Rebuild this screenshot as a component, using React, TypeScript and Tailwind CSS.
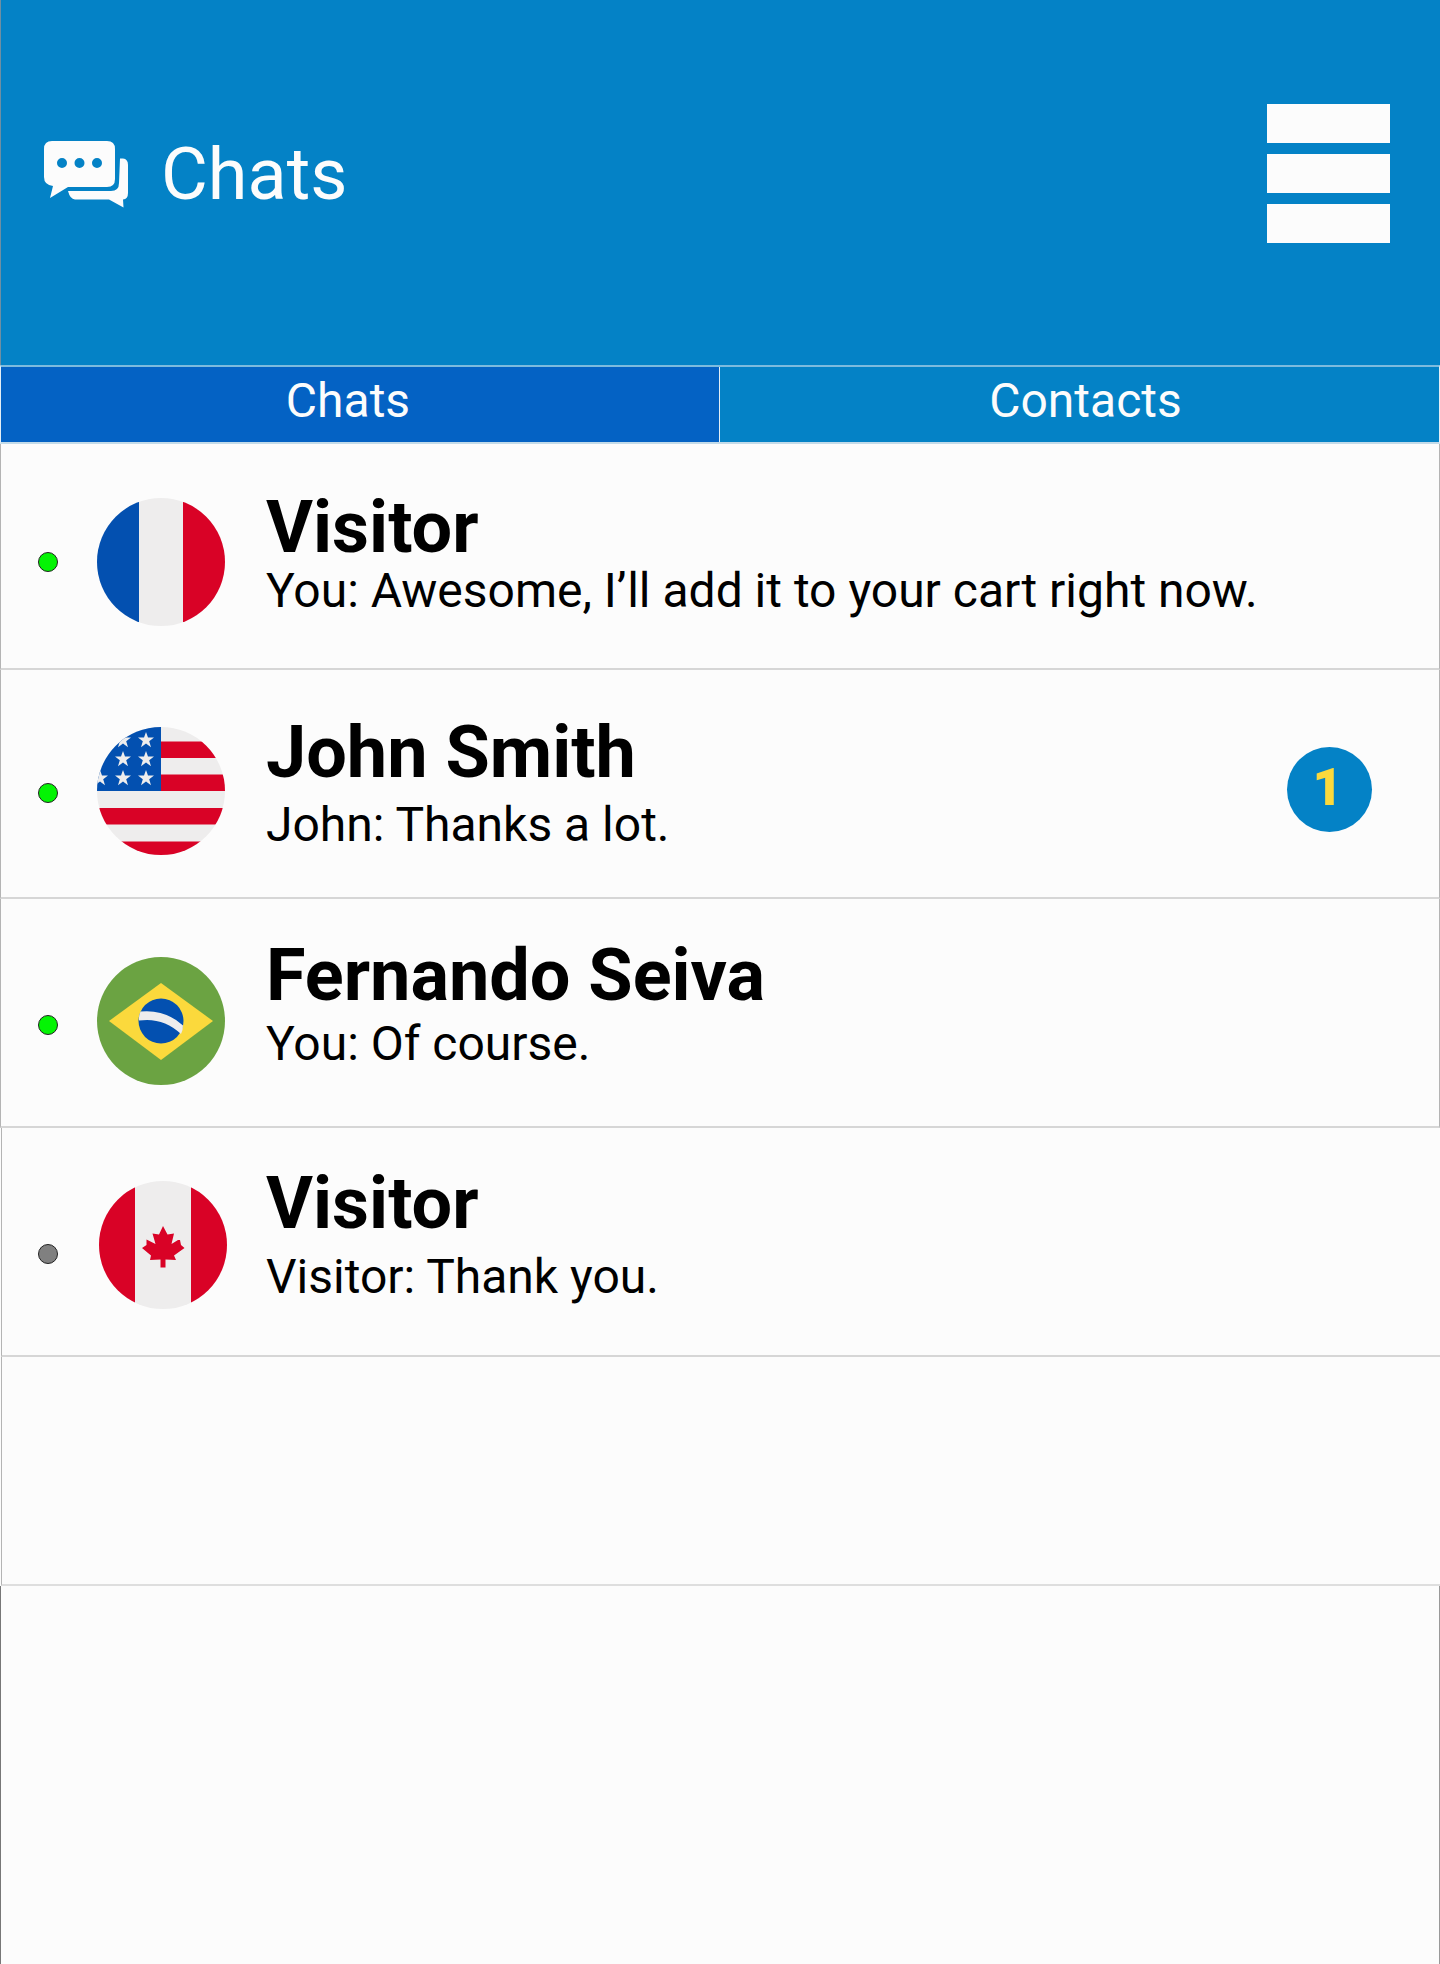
import type { ReactNode } from "react";

function ChatsIcon() {
  return (
    <svg viewBox="0 0 84 67" className="h-[67px] w-[84px] shrink-0" fill="#fcfcfc" aria-hidden="true">
      <path
        fillRule="evenodd"
        d="M8 0H63Q71 0 71 8V38Q71 46 63 46H24L6 57L9 45Q0 44 0 36V8Q0 0 8 0ZM18 17a5 5 0 1 0 0 10a5 5 0 1 0 0-10ZM35.500 17a5 5 0 1 0 0 10a5 5 0 1 0 0-10ZM53 17a5 5 0 1 0 0 10a5 5 0 1 0 0-10Z"
      />
      <path d="M76 17.500H79Q84 18 84 24V52Q84 58 79 58.500L79.500 66.500L65 58.500H31Q26 58 24 50H67Q75 50 75 42Z" />
    </svg>
  );
}

function Flag({ id, children }: { id: string; children: ReactNode }) {
  return (
    <svg viewBox="0 0 128 128" className="size-32 shrink-0" aria-hidden="true">
      <clipPath id={id}>
        <circle cx="64" cy="64" r="64" />
      </clipPath>
      <g clipPath={`url(#${id})`}>{children}</g>
    </svg>
  );
}

const france = (
  <Flag id="fr">
    <rect width="128" height="128" fill="#eeeded" />
    <rect width="42" height="128" fill="#0350b0" />
    <rect x="86" width="42" height="128" fill="#d90226" />
  </Flag>
);

const starCenters = [
  [26, 13], [49, 13],
  [26, 32], [49, 32],
  [3, 51], [26, 51], [49, 51],
];

const usa = (
  <Flag id="us">
    <rect width="128" height="128" fill="#eeeded" />
    <path fill="#d90226" d="M64 14.500h64v16.500H64zM64 47.500h64V64H64zM0 81h128v16.500H0zM0 114.500h128V128H0z" />
    <rect width="64" height="64" fill="#0350b0" />
    {starCenters.map(([x, y]) => (
      <path
        key={`${x}-${y}`}
        transform={`translate(${x} ${y})`}
        fill="#eeeded"
        d="M0-8L2-2.500H8L3.200 1.200L5 7.200L0 3.500L-5 7.200L-3.200 1.200L-8-2.500H-2Z"
      />
    ))}
  </Flag>
);

const brazil = (
  <Flag id="br">
    <rect width="128" height="128" fill="#6ba342" />
    <path fill="#fbd93c" d="M64 26L116 64L64 103L12 64Z" />
    <circle cx="64" cy="64" r="22.500" fill="#0350b0" />
    <path fill="#eeeded" d="M43.500 54.500Q68 52 86 68.500Q86 73 84 77Q66 60 42 63.500Q41.500 59 43.500 54.500Z" />
  </Flag>
);

const canada = (
  <Flag id="ca">
    <rect width="128" height="128" fill="#eeeded" />
    <rect width="36" height="128" fill="#d90226" />
    <rect x="92" width="36" height="128" fill="#d90226" />
    <path
      fill="#d90226"
      d="M64 45L68.500 53.500L75 52.500L72.500 63L79 59L81 59L82 64L85.500 67L75 74.500L77 79L66.500 78.500V86.500H61.500V78.500L51 79L52 74.500L43 67L47.500 64L47.500 58.500L56.500 63L53.500 52.500L60 53.500Z"
    />
  </Flag>
);

type Chat = {
  name: string;
  preview: string;
  online: boolean;
  unread?: number;
  flag: ReactNode;
  row: string;
  dotTop: string;
  flagPlace: string;
  textTop: string;
};

const chats: Chat[] = [
  {
    name: "Visitor",
    preview: "You: Awesome, I’ll add it to your cart right now.",
    online: true,
    flag: france,
    row: "min-h-[226px] border-x pl-[37px]",
    dotTop: "mt-[108px]",
    flagPlace: "mt-[54px] ml-[39px] mr-[41px]",
    textTop: "mt-12 gap-[3px]",
  },
  {
    name: "John Smith",
    preview: "John: Thanks a lot.",
    online: true,
    unread: 1,
    flag: usa,
    row: "min-h-[229px] border-x pl-[37px]",
    dotTop: "mt-[113px]",
    flagPlace: "mt-[57px] ml-[39px] mr-[41px]",
    textTop: "mt-[47px] gap-3",
  },
  {
    name: "Fernando Seiva",
    preview: "You: Of course.",
    online: true,
    flag: brazil,
    row: "min-h-[229px] border-x pl-[37px]",
    dotTop: "mt-[116px]",
    flagPlace: "mt-[58px] ml-[39px] mr-[41px]",
    textTop: "mt-[41px] gap-2",
  },
  {
    name: "Visitor",
    preview: "Visitor: Thank you.",
    online: false,
    flag: canada,
    row: "ml-px min-h-[229px] border-l pl-9",
    dotTop: "mt-[116px]",
    flagPlace: "mt-[53px] ml-[41px] mr-[39px]",
    textTop: "mt-10 gap-[13px]",
  },
];

function ChatRow({ chat }: { chat: Chat }) {
  return (
    <li className={`flex items-start border-b-2 border-x-[#b4b4b4] border-b-[#d6d6d6] ${chat.row}`}>
      <span
        role="img"
        aria-label={chat.online ? "Online" : "Offline"}
        className={`size-5 shrink-0 rounded-full border border-[#222] ${chat.online ? "bg-[#04f404]" : "bg-[#808080]"} ${chat.dotTop}`}
      />
      <div className={`shrink-0 ${chat.flagPlace}`}>{chat.flag}</div>
      <div className={`flex min-w-0 flex-1 flex-col ${chat.textTop}`}>
        <h2 className="text-[72px] leading-[72px] font-bold">{chat.name}</h2>
        <p className="text-[48px] leading-[48px]">{chat.preview}</p>
      </div>
      {chat.unread && (
        <span className="mt-[77px] mr-[67px] flex size-[85px] shrink-0 items-center justify-center rounded-full bg-[#0482c6] pr-1 pb-[3px] text-[52px] leading-[72px] font-black text-[#fbd93c]">
          {chat.unread}
        </span>
      )}
    </li>
  );
}

export default function App() {
  return (
    <div className="flex min-h-screen flex-col bg-[#fcfcfc] font-[Roboto,sans-serif] text-black">
      <header className="flex items-center justify-between border-l border-l-[#6f8fa3] bg-[#0482c6] pt-[104px] pr-[50px] pb-[122px] pl-[43px] text-[#fcfcfc]">
        <div className="flex items-center gap-[33px] pt-[2px]">
          <ChatsIcon />
          <h1 className="text-[72px] leading-[72px]">Chats</h1>
        </div>
        <button type="button" aria-label="Menu" className="flex w-[123px] flex-col gap-[11px]">
          <span className="h-[39px] bg-[#fcfcfc]" />
          <span className="h-[39px] bg-[#fcfcfc]" />
          <span className="h-[39px] bg-[#fcfcfc]" />
        </button>
      </header>
      <nav className="grid grid-cols-2 border-x border-y-2 border-x-[#e4eef5] border-t-[#7dbbde] border-b-[#c3dbe9] text-[48px] leading-[48px] text-[#fcfcfc]">
        <button type="button" className="border-r border-[#e4eef5] bg-[#0462c4] pt-[10px] pr-6 pb-[17px]">
          Chats
        </button>
        <button type="button" className="bg-[#0482c6] pt-[10px] pb-[17px] pl-3">
          Contacts
        </button>
      </nav>
      <ul>
        {chats.map((chat, i) => (
          <ChatRow key={i} chat={chat} />
        ))}
      </ul>
      <div className="ml-px min-h-[229px] border-b-2 border-l border-b-[#dedede] border-l-[#b4b4b4]" />
      <div className="flex-1 border-x border-l-[#777] border-r-[#999]" />
    </div>
  );
}
